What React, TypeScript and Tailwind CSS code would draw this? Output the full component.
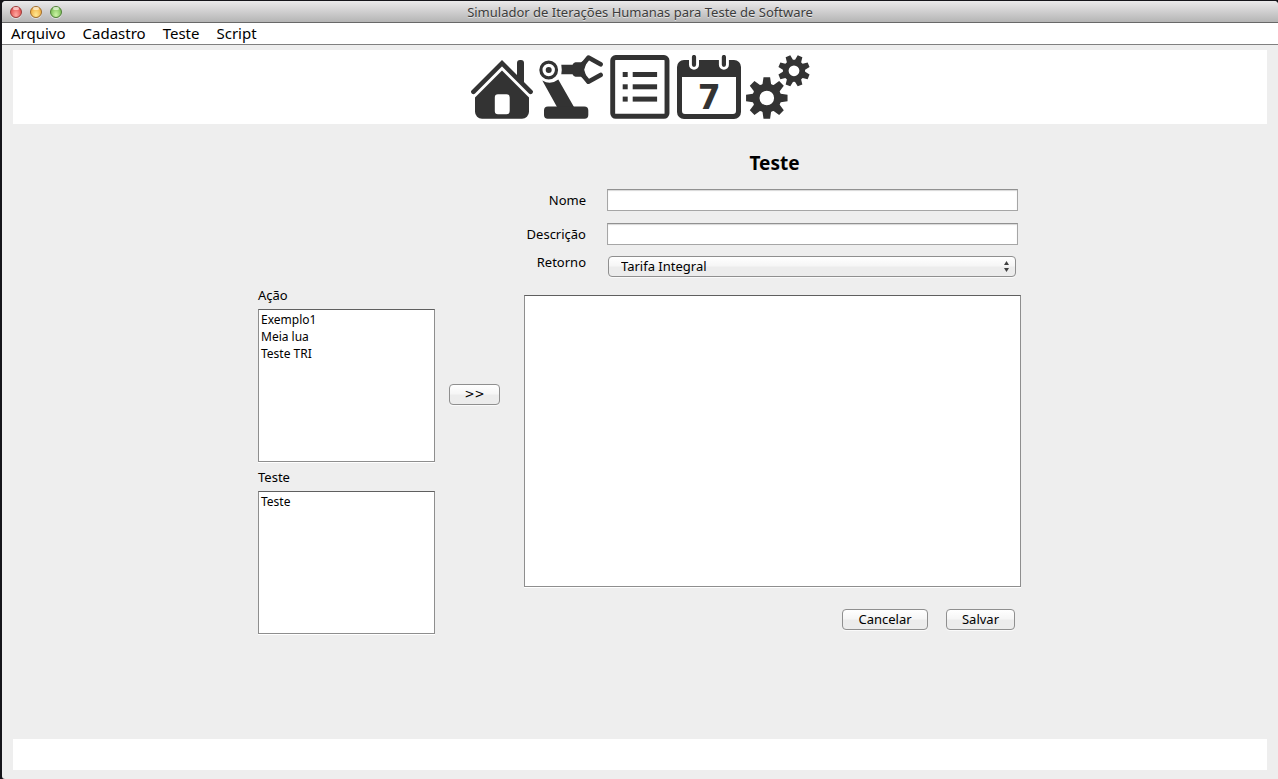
import React, { useState } from "react";

const INK = "#333333";

const pushButton =
  "h-[21px] rounded-[4px] border border-[#8f8f8f] bg-linear-to-b from-white from-0% via-[#f6f6f6] via-45% to-[#ececec] to-55% leading-[19px] text-black shadow-[0_1px_0_#fafafa] active:to-[#d0d0d0]";

const textField =
  "h-[22px] w-full border border-[#a6a6a6] border-t-[#919191] bg-white px-1 text-[13px] leading-5 shadow-[inset_0_1px_1px_#d8d8d8] outline-none";

const listBox =
  "block w-full appearance-none overflow-hidden rounded-none border border-[#8e8e8e] border-t-[#5f5f5f] bg-white p-0 pt-px text-[12px] shadow-[0_1px_0_#ffffff] outline-none";

function HouseIcon() {
  return (
    <svg viewBox="0 0 64 64" className="size-16" fill={INK} aria-hidden="true">
      <path
        d="M3.4 36.8 32 8.2 60.6 36.8"
        fill="none"
        stroke={INK}
        strokeWidth="4.6"
        strokeLinecap="round"
        strokeLinejoin="miter"
      />
      <path d="M47 20.8V8a3 3 0 0 1 3-3h1a3 3 0 0 1 3 3v20Z" />
      <path
        fillRule="evenodd"
        d="M32 15.6 59 42.6V56.7a7 7 0 0 1-7 7H12a7 7 0 0 1-7-7V42.6ZM28 39.3a3.2 3.2 0 0 0-3.2 3.2V56a3.2 3.2 0 0 0 3.2 3.2h8.5a3.2 3.2 0 0 0 3.2-3.2V42.5a3.2 3.2 0 0 0-3.2-3.2Z"
      />
    </svg>
  );
}

function RobotArmIcon() {
  return (
    <svg viewBox="0 0 64 64" className="size-16" fill={INK} aria-hidden="true">
      <circle cx="9.7" cy="15" r="7.8" fill="none" stroke={INK} strokeWidth="3.2" />
      <circle cx="9.7" cy="15" r="3" />
      <path d="M22.3 9.8H33.5Q34.5 7.3 36.5 7.3H42L49 3 45.2 14.7 49 27 42 21.700H36.500Q34.500 21.700 33.500 19.300H22.300Q23.200 15 22.300 9.800Z" />
      <path
        d="M42.3 11.5 49.4 2.6 61.6 9.3M42.3 18 49.4 26.7 61.6 19.9"
        fill="none"
        stroke={INK}
        strokeWidth="4.6"
        strokeLinejoin="round"
        strokeLinecap="round"
      />
      <path d="M3.3 25.6Q11.5 30.6 19.3 24.6L35 52H18Z" />
      <path d="M9 51.6H45.3a4 4 0 0 1 4 4V60a3.7 3.7 0 0 1-3.7 3.7H8.7A3.7 3.7 0 0 1 5 60V55.6a4 4 0 0 1 4-4Z" />
    </svg>
  );
}

function ListIcon() {
  return (
    <svg viewBox="0 0 64 64" className="size-16" fill={INK} aria-hidden="true">
      <rect x="4.7" y="2.5" width="54.3" height="58.8" rx="3" fill="none" stroke={INK} strokeWidth="4.9" />
      {[17, 29.3, 41.6].map((y) => (
        <g key={y}>
          <rect x="14.7" y={y} width="5" height="5" />
          <rect x="24.7" y={y} width="24.4" height="5" />
        </g>
      ))}
    </svg>
  );
}

function CalendarIcon() {
  return (
    <svg viewBox="0 0 64 64" className="size-16" fill={INK} aria-hidden="true">
      <path
        fillRule="evenodd"
        d="M7 5H57a7 7 0 0 1 7 7V57a7 7 0 0 1-7 7H7a7 7 0 0 1-7-7V12a7 7 0 0 1 7-7ZM5 22V56a3 3 0 0 0 3 3H56a3 3 0 0 0 3-3V22Z"
      />
      <path d="M17 2V9.8M46.9 2V9.8" stroke="#ffffff" strokeWidth="10" strokeLinecap="round" />
      <path d="M17 2V9.8M46.9 2V9.8" stroke={INK} strokeWidth="4.2" strokeLinecap="round" />
      <text
        x="32.3"
        y="54"
        textAnchor="middle"
        className="font-['DejaVu_Sans',sans-serif] text-[33px] font-bold"
      >
        7
      </text>
    </svg>
  );
}

function gearPath(cx: number, cy: number, tip: number, root: number, hole: number, turn: number) {
  const at = (radius: number, degrees: number) => {
    const a = ((degrees + turn) * Math.PI) / 180;
    return `${(cx + radius * Math.cos(a)).toFixed(2)} ${(cy + radius * Math.sin(a)).toFixed(2)}`;
  };
  let d = "";
  for (let i = 0; i < 8; i++) {
    const a = i * 45;
    d += `${i === 0 ? "M" : "L"}${at(root, a - 17)}L${at(tip, a - 9)}L${at(tip, a + 9)}L${at(root, a + 17)}`;
    d += `Q${at(root * 0.97, a + 22.5)} ${at(root, a + 28)}`;
  }
  return `${d}ZM${cx - hole} ${cy}a${hole} ${hole} 0 1 0 ${hole * 2} 0a${hole} ${hole} 0 1 0 ${-hole * 2} 0Z`;
}

function GearsIcon() {
  return (
    <svg viewBox="0 0 64 64" className="size-16" fill={INK} aria-hidden="true">
      <path fillRule="evenodd" d={gearPath(20.8, 43, 21, 14.6, 7.3, 0)} />
      <path fillRule="evenodd" d={gearPath(48, 15.8, 16, 11.2, 5.4, 22.5)} />
    </svg>
  );
}

const tools = [
  { name: "Início", Icon: HouseIcon },
  { name: "Robô", Icon: RobotArmIcon },
  { name: "Lista", Icon: ListIcon },
  { name: "Agenda", Icon: CalendarIcon },
  { name: "Configurações", Icon: GearsIcon },
];

const lights = [
  { name: "Fechar", style: "border-[#9c3b38] bg-radial-[at_50%_80%] from-[#ffaaa2] to-[#dc3c3c]" },
  { name: "Minimizar", style: "border-[#a06d2a] bg-radial-[at_50%_80%] from-[#ffe993] to-[#eda02f]" },
  { name: "Ampliar", style: "border-[#4f8036] bg-radial-[at_50%_80%] from-[#cdf5a6] to-[#68b145]" },
];

function TitleBar() {
  return (
    <header className="grid h-[22px] grid-cols-[1fr_auto_1fr] items-center rounded-t-[4px] border-b border-[#686868] bg-linear-to-b from-[#ebeaeb] to-[#b5b5b5]">
      <div className="flex gap-2 pl-2">
        {lights.map((light) => (
          <button
            key={light.name}
            aria-label={light.name}
            className={`relative size-3 rounded-full border shadow-[0_1px_0_#e0e0e0] ${light.style}`}
          >
            <span className="absolute inset-x-[2px] top-0 h-[3px] rounded-full bg-white/60" />
          </button>
        ))}
      </div>
      <h1 className="text-[13px] leading-5 text-[#3c3c3c] [text-shadow:0_1px_0_#e4e4e4]">
        Simulador de Iterações Humanas para Teste de Software
      </h1>
    </header>
  );
}

function MenuBar() {
  return (
    <nav className="flex h-[22px] items-start gap-[17px] border-b border-[#808080] bg-white px-[9px] text-[15px] leading-5">
      {["Arquivo", "Cadastro", "Teste", "Script"].map((item) => (
        <button key={item}>{item}</button>
      ))}
    </nav>
  );
}

function TestForm() {
  const [chosen, setChosen] = useState<string[]>([]);
  const [steps, setSteps] = useState<string[]>([]);
  const pick = (event: React.ChangeEvent<HTMLSelectElement>) =>
    setChosen(Array.from(event.target.selectedOptions, (option) => option.value));

  return (
    <form
      className="mx-auto flex w-full max-w-[764px] pr-px text-[13px]"
      onSubmit={(event) => event.preventDefault()}
    >
      <div className="w-[177px] shrink-0 pt-[161px]">
        <label htmlFor="acao" className="block h-6 leading-5">
          Ação
        </label>
        <select id="acao" multiple onChange={pick} className={`${listBox} h-[153px]`}>
          {["Exemplo1", "Meia lua", "Teste TRI"].map((name) => (
            <option key={name} className="h-[17px] min-h-0 px-[2px] py-0 leading-[17px]">
              {name}
            </option>
          ))}
        </select>
        <label htmlFor="testes" className="mt-[5px] block h-6 leading-5">
          Teste
        </label>
        <select id="testes" multiple onChange={pick} className={`${listBox} h-[143px]`}>
          <option className="h-[17px] min-h-0 px-[2px] py-0 leading-[17px]">Teste</option>
        </select>
      </div>

      <div className="shrink-0 pt-[260px] pr-6 pl-[14px]">
        <button
          type="button"
          aria-label="Adicionar"
          onClick={() => setSteps([...steps, ...chosen])}
          className={`${pushButton} w-[51px] font-['DejaVu_Sans',sans-serif] text-[12px]`}
        >
          &gt;&gt;
        </button>
      </div>

      <div className="min-w-0 flex-1 pt-6">
        <h2 className="pl-1 text-center text-[19px] leading-[30px] font-bold">Teste</h2>
        <div className="mt-[11px] grid grid-cols-[62px_1fr] gap-x-[21px] pr-[3px] leading-[22px]">
          <label htmlFor="nome" className="text-right">
            Nome
          </label>
          <input id="nome" type="text" className={`${textField} mb-3`} />
          <label htmlFor="descricao" className="text-right">
            Descrição
          </label>
          <input id="descricao" type="text" className={`${textField} mb-[11px]`} />
          <label htmlFor="retorno" className="-mt-[5px] text-right">
            Retorno
          </label>
          <div className="relative mr-[2px] ml-px">
            <select
              id="retorno"
              className={`${pushButton} block w-full appearance-none px-3 text-[13px] outline-none`}
            >
              <option>Tarifa Integral</option>
            </select>
            <svg
              viewBox="0 0 5 11"
              className="pointer-events-none absolute top-[5px] right-[7px] h-[11px] w-[5px]"
              fill="#404040"
              aria-hidden="true"
            >
              <path d="M2.5 0 5 4H0ZM0 7H5L2.5 11Z" />
            </svg>
          </div>
        </div>
        <select
          multiple
          aria-label="Ações do teste"
          className={`${listBox} mt-[18px] h-[292px]`}
        >
          {steps.map((step, index) => (
            <option key={index} className="h-[17px] min-h-0 px-[2px] py-0 leading-[17px]">
              {step}
            </option>
          ))}
        </select>
        <div className="mt-[22px] flex justify-end gap-[18px] pr-[6px] text-[13px]">
          <button type="reset" className={`${pushButton} w-[86px]`}>
            Cancelar
          </button>
          <button type="submit" className={`${pushButton} w-[69px]`}>
            Salvar
          </button>
        </div>
      </div>
    </form>
  );
}

export default function App() {
  return (
    <div className="min-h-screen bg-[#15151a] pt-px pl-[2px] font-['Noto_Sans','Lucida_Grande',sans-serif] text-black">
      <div className="flex min-h-[calc(100vh-1px)] flex-col rounded-t-[4px] rounded-bl-[3px] bg-[#eeeeee]">
        <TitleBar />
        <MenuBar />
        <div className="mx-[11px] mt-[5px] flex justify-center gap-[5px] bg-white py-[5px]">
          {tools.map(({ name, Icon }) => (
            <button key={name} aria-label={name}>
              <Icon />
            </button>
          ))}
        </div>
        <main className="flex-1">
          <TestForm />
        </main>
        <footer className="mx-[11px] mb-[9px] h-[31px] bg-white" />
      </div>
    </div>
  );
}
